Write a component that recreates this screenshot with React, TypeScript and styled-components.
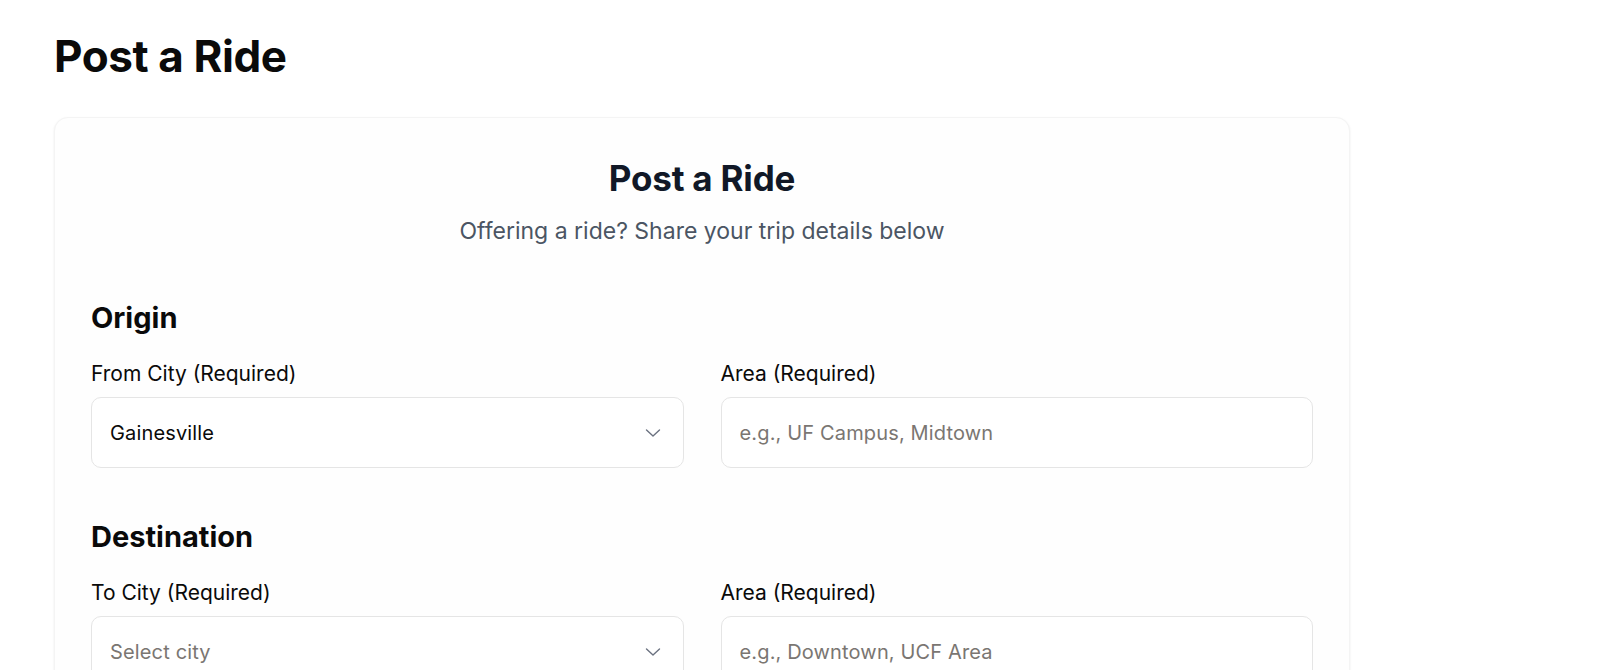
import React from "react";
import styled, { createGlobalStyle } from "styled-components";

const GlobalStyle = createGlobalStyle`
  * { box-sizing: border-box; }
  html, body { margin: 0; padding: 0; background: #ffffff; }
  body {
    font-family: Inter, "Noto Sans", "Liberation Sans", sans-serif;
    color: #0a0a0a;
    -webkit-font-smoothing: antialiased;
  }
  input::placeholder { color: #7a7672; opacity: 1; }
`;

const Page = styled.main`
  padding: 30px 54px 60px 54px;
`;

const PageTitle = styled.h1`
  margin: 0 0 35px 0;
  font-size: 44px;
  line-height: 52px;
  font-weight: 700;
  letter-spacing: -0.4px;
  color: #0a0a0a;
`;

const Card = styled.section`
  width: 1296px;
  background: #fefefe;
  border: 1px solid #f4f4f4;
  border-radius: 14px;
  box-shadow: 0 1px 3px rgba(0, 0, 0, 0.05), 0 1px 2px rgba(0, 0, 0, 0.03);
  padding: 39px 36px 48px 36px;
`;

const CardHeader = styled.header`
  display: flex;
  flex-direction: column;
  align-items: center;
  gap: 17px;
  margin-bottom: 54px;
`;

const CardTitle = styled.h2`
  margin: 0;
  font-size: 35px;
  line-height: 42px;
  font-weight: 700;
  letter-spacing: -0.2px;
  color: #111827;
`;

const Subtitle = styled.p`
  margin: 0;
  font-size: 23px;
  line-height: 30px;
  font-weight: 400;
  color: #4b5563;
`;

const Section = styled.div`
  display: flex;
  flex-direction: column;
  gap: 25px;
  margin-bottom: 51px;
`;

const SectionTitle = styled.h3`
  margin: 0;
  font-size: 29px;
  line-height: 36px;
  font-weight: 700;
  color: #0a0a0a;
`;

const Row = styled.div`
  display: grid;
  grid-template-columns: 1fr 1fr;
  column-gap: 37px;
`;

const Field = styled.label`
  display: flex;
  flex-direction: column;
  gap: 10px;
`;

const LabelText = styled.span`
  font-size: 21px;
  line-height: 26px;
  font-weight: 400;
  color: #0a0a0a;
`;

const SelectBox = styled.div<{ $empty?: boolean }>`
  height: 71px;
  display: flex;
  align-items: center;
  justify-content: space-between;
  padding: 0 22px 0 18px;
  border: 1px solid #e5e5e5;
  border-radius: 10px;
  background: #ffffff;
  font-size: 20px;
  letter-spacing: 0.15px;
  color: ${(p) => (p.$empty ? "#7a7672" : "#0a0a0a")};
`;

const TextInput = styled.input`
  height: 71px;
  width: 100%;
  padding: 0 18px;
  border: 1px solid #e5e5e5;
  border-radius: 10px;
  background: #ffffff;
  font-family: inherit;
  font-size: 20px;
  letter-spacing: 0.15px;
  color: #0a0a0a;
  outline: none;
`;

const Chevron = () => (
  <svg width="16" height="16" viewBox="0 0 16 16" fill="none" aria-hidden="true">
    <polyline
      points="1.5,5 8,11 14.5,5"
      stroke="#6b7280"
      strokeWidth="1.4"
      strokeLinecap="round"
      strokeLinejoin="round"
    />
  </svg>
);

type SelectProps = { value?: string; placeholder: string };
const Select = ({ value, placeholder }: SelectProps) => (
  <SelectBox $empty={!value}>
    <span>{value ?? placeholder}</span>
    <Chevron />
  </SelectBox>
);

export default function App() {
  return (
    <>
      <GlobalStyle />
      <Page>
        <PageTitle>Post a Ride</PageTitle>
        <Card>
          <CardHeader>
            <CardTitle>Post a Ride</CardTitle>
            <Subtitle>Offering a ride? Share your trip details below</Subtitle>
          </CardHeader>

          <Section>
            <SectionTitle>Origin</SectionTitle>
            <Row>
              <Field>
                <LabelText>From City (Required)</LabelText>
                <Select value="Gainesville" placeholder="Select city" />
              </Field>
              <Field>
                <LabelText>Area (Required)</LabelText>
                <TextInput placeholder="e.g., UF Campus, Midtown" />
              </Field>
            </Row>
          </Section>

          <Section>
            <SectionTitle>Destination</SectionTitle>
            <Row>
              <Field>
                <LabelText>To City (Required)</LabelText>
                <Select placeholder="Select city" />
              </Field>
              <Field>
                <LabelText>Area (Required)</LabelText>
                <TextInput placeholder="e.g., Downtown, UCF Area" />
              </Field>
            </Row>
          </Section>
        </Card>
      </Page>
    </>
  );
}
